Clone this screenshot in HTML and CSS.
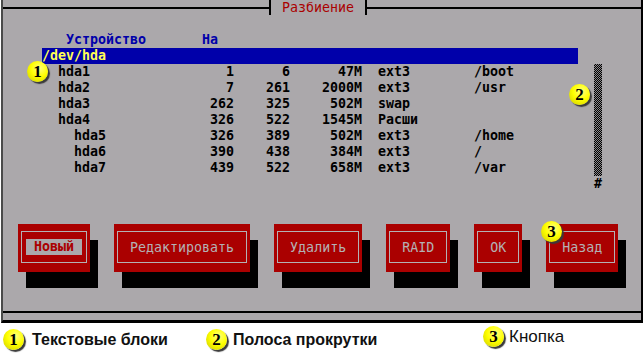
FILE: index.html
```html
<!DOCTYPE html>
<html lang="ru">
<head>
    <meta charset="UTF-8">
    <title>Разбиение</title>
    <link rel="stylesheet" href="styles.css">
</head>
<body>

<div class="screen">
    <div class="titlebar">
        <div class="rule rule-left"></div>
        <div class="title">Разбиение</div>
        <div class="rule"></div>
    </div>

    <div class="listbox">
        <div class="table">
            <div class="row head">
                <span class="c-name">Устройство</span>
                <span class="c-start">На</span>
            </div>
            <div class="row disk">/dev/hda</div>
            <div class="row"><span class="c-name">hda1</span><span class="c-num">1</span><span class="c-end">6</span><span class="c-size">47M</span><span class="c-type">ext3</span><span>/boot</span></div>
            <div class="row"><span class="c-name">hda2</span><span class="c-num">7</span><span class="c-end">261</span><span class="c-size">2000M</span><span class="c-type">ext3</span><span>/usr</span></div>
            <div class="row"><span class="c-name">hda3</span><span class="c-num">262</span><span class="c-end">325</span><span class="c-size">502M</span><span class="c-type">swap</span></div>
            <div class="row"><span class="c-name">hda4</span><span class="c-num">326</span><span class="c-end">522</span><span class="c-size">1545M</span><span class="c-type">Расши</span></div>
            <div class="row"><span class="c-name sub">hda5</span><span class="c-num">326</span><span class="c-end">389</span><span class="c-size">502M</span><span class="c-type">ext3</span><span>/home</span></div>
            <div class="row"><span class="c-name sub">hda6</span><span class="c-num">390</span><span class="c-end">438</span><span class="c-size">384M</span><span class="c-type">ext3</span><span>/</span></div>
            <div class="row"><span class="c-name sub">hda7</span><span class="c-num">439</span><span class="c-end">522</span><span class="c-size">658M</span><span class="c-type">ext3</span><span>/var</span></div>
        </div>
        <div class="scroll">
            <div class="thumb"></div>
            <div class="mark">#</div>
        </div>
    </div>

    <div class="buttons">
        <div class="btn"><span class="frame"><span class="focus">Новый</span></span></div>
        <div class="btn"><span class="frame">Редактировать</span></div>
        <div class="btn"><span class="frame">Удалить</span></div>
        <div class="btn"><span class="frame">RAID</span></div>
        <div class="btn"><span class="frame">OK</span></div>
        <div class="btn"><span class="frame">Назад</span></div>
    </div>

    <div class="bottom-rule"></div>

    <span class="badge badge-rows">1</span>
    <span class="badge badge-scroll">2</span>
    <span class="badge badge-button">3</span>
</div>

<div class="legend">
    <div class="legend-item item-1"><span class="badge">1</span>Текстовые блоки</div>
    <div class="legend-item item-2"><span class="badge">2</span>Полоса прокрутки</div>
    <div class="legend-item item-3"><span class="badge">3</span>Кнопка</div>
</div>

</body>
</html>
```

FILE: styles.css
```css
body {
    margin: 0;
    background: #fff;
    font-family: "DejaVu Sans Mono", "Liberation Mono", monospace;
    font-size: 13.3px;
    font-weight: bold;
}
.screen {
    position: relative;
    height: 320px;
    margin: 0 1px;
    background: #aba8ab;
    border-left: 2px solid #4a4a4a;
    border-right: 2px solid #000;
    border-bottom: 3px solid #000;
}
.titlebar {
    display: flex;
    height: 16px;
}
.rule {
    flex: 1;
    height: 7px;
    border-bottom: 2px solid #000;
}
.rule-left {
    flex: none;
    width: 266px;
}
.title {
    height: 15px;
    padding: 0 11px;
    border-left: 2px solid #000;
    border-right: 2px solid #000;
    color: #aa0000;
    line-height: 15px;
    font-weight: normal;
}
.listbox {
    display: flex;
    margin-top: 16px;
    padding-left: 39px;
    color: #000;
}
.table {
    width: 536px;
}
.row {
    display: flex;
    height: 16px;
    line-height: 16px;
    white-space: pre;
}
.row.head {
    color: #0000aa;
}
.row.disk {
    background: #0000aa;
    color: #ffff55;
}
.c-name {
    width: 112px;
    padding-left: 16px;
}
.c-name.sub {
    width: 96px;
    padding-left: 32px;
}
.head .c-name {
    width: 104px;
    padding-left: 24px;
}
.c-start {
    width: 32px;
    padding-left: 32px;
}
.c-num {
    width: 64px;
    text-align: right;
}
.c-end {
    width: 56px;
    text-align: right;
}
.c-size {
    width: 72px;
    text-align: right;
}
.c-type {
    width: 96px;
    padding-left: 16px;
}
.scroll {
    width: 8px;
    margin-left: 16px;
    padding-top: 32px;
}
.thumb {
    height: 112px;
    background: repeating-conic-gradient(#000 0 25%, #8a878a 0 50%) 0 0 / 2px 2px;
}
.mark {
    height: 16px;
    line-height: 16px;
}
.buttons {
    display: flex;
    gap: 24px;
    margin-top: 32px;
    padding-left: 15px;
}
.btn {
    height: 48px;
    box-sizing: border-box;
    padding: 7px 3px 9px;
    background: #aa0000;
    box-shadow: 8px 16px 0 #000;
}
.frame {
    display: flex;
    align-items: center;
    height: 100%;
    box-sizing: border-box;
    padding: 0 12px;
    border: 1px solid #b4b1b4;
    color: #b4b1b4;
    font-weight: normal;
    white-space: pre;
}
.focus {
    margin: 0 -8px;
    padding: 0 8px;
    line-height: 16px;
    background: #aba8ab;
    color: #aa0000;
    font-weight: bold;
}
.bottom-rule {
    margin-top: 39px;
    border-top: 2px solid #000;
}
.badge {
    display: inline-flex;
    align-items: center;
    justify-content: center;
    width: 21px;
    height: 21px;
    border-radius: 50%;
    background: radial-gradient(circle at 60% 35%, #ffff80 0, #ffff00 45%, #c8c800 100%);
    box-shadow: 2px 2px 1px #3a3a3a;
    color: #000;
    font-family: "Liberation Serif", serif;
    font-size: 17px;
    font-weight: bold;
}
.screen .badge {
    position: absolute;
}
.badge-rows {
    left: 24px;
    top: 61px;
}
.badge-scroll {
    left: 566px;
    top: 84px;
}
.badge-button {
    left: 538px;
    top: 221px;
}
.legend {
    display: flex;
    height: 31px;
    padding-left: 3px;
    font-family: "Liberation Sans", Arial, sans-serif;
    font-size: 16px;
    font-weight: bold;
    color: #111;
}
.legend-item {
    display: flex;
    align-items: center;
    gap: 8px;
}
.item-1 {
    width: 203px;
    padding-top: 2px;
}
.item-2 {
    width: 277px;
    gap: 6px;
    padding-top: 2px;
}
.item-3 {
    gap: 5px;
    padding-bottom: 4px;
    font-weight: normal;
    font-size: 17px;
}
```
